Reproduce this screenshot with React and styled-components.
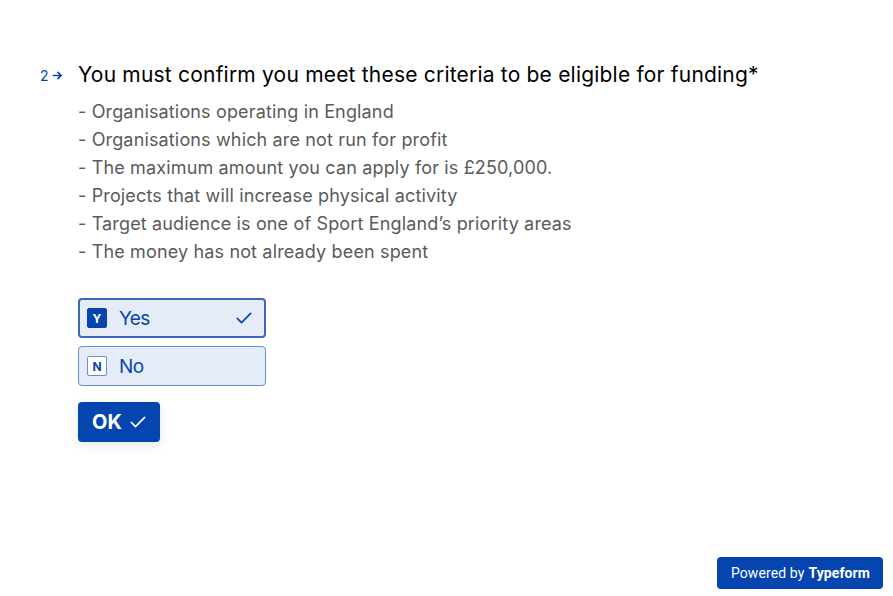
import styled, { createGlobalStyle } from 'styled-components';

const Global = createGlobalStyle`
	html, body {
		margin: 0;
		padding: 0;
		background: #fff;
		font-family: Inter, "Noto Sans", sans-serif;
	}
`;

const Page = styled.div`
	position: relative;
	width: 893px;
	height: 596px;
	overflow: hidden;
	padding: 61px 0 0 40px;
	box-sizing: border-box;
`;

const Question = styled.div`
	display: flex;
	align-items: flex-start;
`;

const Counter = styled.div`
	display: flex;
	align-items: center;
	gap: 3px;
	width: 38px;
	height: 28px;
	color: #0445af;
	font-size: 14px;
	flex-shrink: 0;
`;

const Body = styled.div`
	display: flex;
	flex-direction: column;
`;

const Title = styled.h1`
	margin: 0;
	font-size: 21px;
	line-height: 28px;
	font-weight: 400;
	letter-spacing: 0.2px;
	color: #000;
	white-space: nowrap;
`;

const Description = styled.div`
	margin-top: 9px;
	font-size: 18px;
	line-height: 28px;
	letter-spacing: 0.15px;
	color: #5a5a5a;
`;

const Choices = styled.div`
	display: flex;
	flex-direction: column;
	gap: 8px;
	margin-top: 32px;
	width: 188px;
`;

const Choice = styled.div`
	display: flex;
	align-items: center;
	gap: 12px;
	height: 40px;
	box-sizing: border-box;
	padding: 0 10px 0 ${(p) => (p.$selected ? 7 : 8)}px;
	border-radius: 4px;
	background: #e6ecf7;
	border: ${(p) => (p.$selected ? '2px solid #3a68bf' : '1px solid #6a8fcf')};
	color: #0445af;
	font-size: 19px;
	letter-spacing: -0.6px;
`;

const Key = styled.span`
	display: flex;
	align-items: center;
	justify-content: center;
	width: 20px;
	height: 20px;
	box-sizing: border-box;
	border-radius: 2px;
	font-size: 12px;
	font-weight: 700;
	letter-spacing: 0;
	border: 1px solid ${(p) => (p.$selected ? '#0445af' : '#6a8fcf')};
	background: ${(p) => (p.$selected ? '#0445af' : '#fff')};
	color: ${(p) => (p.$selected ? '#fff' : '#0445af')};
`;

const Label = styled.span`
	flex: 1;
`;

const OkButton = styled.button`
	display: flex;
	align-items: center;
	gap: 6px;
	align-self: flex-start;
	margin-top: 16px;
	height: 40px;
	padding: 0 12px 0 14px;
	border: none;
	border-radius: 4px;
	background: #0445af;
	color: #fff;
	font-family: inherit;
	font-size: 20px;
	font-weight: 700;
	box-shadow: 0 3px 12px rgba(0, 0, 0, 0.1);
`;

const Powered = styled.a`
	position: absolute;
	right: 10px;
	bottom: 7px;
	display: flex;
	align-items: center;
	gap: 4px;
	height: 32px;
	padding: 0 13px 0 14px;
	border-radius: 4px;
	background: #0445af;
	color: #fff;
	font-family: Roboto, "Liberation Sans", sans-serif;
	font-size: 14px;
	letter-spacing: 0.1px;
	text-decoration: none;

	b {
		font-weight: 700;
	}
`;

const Check = ({ size = 18, width = 2 }) => (
	<svg width={size} height={size} viewBox="0 0 24 24" fill="none" stroke="currentColor" strokeWidth={width} strokeLinecap="round" strokeLinejoin="round">
		<path d="M4 12.5l5 5L20 6.5" />
	</svg>
);

const Arrow = () => (
	<svg width="11" height="11" viewBox="0 0 12 12" fill="none" stroke="currentColor" strokeWidth="1.8" strokeLinecap="round" strokeLinejoin="round">
		<path d="M1.5 6h8.5M6.5 2.5L10 6l-3.5 3.5" />
	</svg>
);

const criteria = [
	'- Organisations operating in England',
	'- Organisations which are not run for profit',
	'- The maximum amount you can apply for is £250,000.',
	'- Projects that will increase physical activity',
	'- Target audience is one of Sport England’s priority areas',
	'- The money has not already been spent'
];

export default function App() {
	return (
		<>
			<Global />
			<Page>
				<Question>
					<Counter>
						2<Arrow />
					</Counter>
					<Body>
						<Title>You must confirm you meet these criteria to be eligible for funding*</Title>
						<Description>
							{criteria.map((line) => (
								<div key={line}>{line}</div>
							))}
						</Description>
						<Choices>
							<Choice $selected>
								<Key $selected>Y</Key>
								<Label>Yes</Label>
								<Check size={20} />
							</Choice>
							<Choice>
								<Key>N</Key>
								<Label>No</Label>
							</Choice>
						</Choices>
						<OkButton>
							OK <Check size={20} />
						</OkButton>
					</Body>
				</Question>
				<Powered>
					Powered by <b>Typeform</b>
				</Powered>
			</Page>
		</>
	);
}
